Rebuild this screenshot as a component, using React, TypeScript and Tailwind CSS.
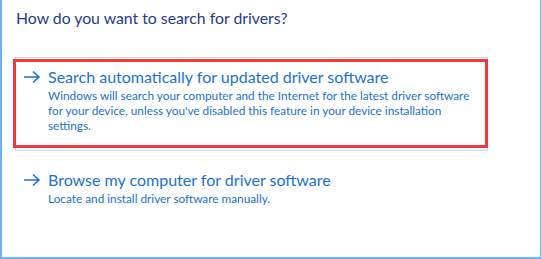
const font = { fontFamily: 'Lato, "Open Sans", sans-serif' };

function Arrow() {
  return (
    <svg width="18" height="14" viewBox="0 0 18 14" className="shrink-0">
      <path d="M1 7h15M10 1.5L16 7l-6 5.5" fill="none" stroke="#1b72d2" strokeWidth="1.6" />
    </svg>
  );
}

export default function App() {
  return (
    <div
      className="relative w-[541px] h-[259px] bg-white border-l-2 border-r border-b-2 border-[#6fb3f4] overflow-hidden"
      style={font}
    >
      <div className="pl-[14px] pt-[6px] text-[15.8px] text-[#1e3a94] leading-[24px]">
        How do you want to search for drivers?
      </div>

      {/* option 1 */}
      <div className="ml-[13px] mt-[27px] w-[473px] h-[94px] border border-[#c9dbea] pl-[7px] pt-[8px]">
        <div className="flex items-center gap-[7px]">
          <Arrow />
          <span className="text-[16px] leading-[22px] text-[#1b72d2]">
            Search automatically for updated driver software
          </span>
        </div>
        <p className="ml-[25px] whitespace-nowrap text-[11.8px] leading-[15px] text-[#1b72d2]">
          Windows will search your computer and the Internet for the latest driver software
          <br />
          for your device, unless you've disabled this feature in your device installation
          <br />
          settings.
        </p>
      </div>

      {/* option 2 */}
      <div className="ml-[13px] mt-[18px] pl-[8px]">
        <div className="flex items-center gap-[7px]">
          <Arrow />
          <span className="text-[16px] leading-[22px] text-[#1b72d2]">
            Browse my computer for driver software
          </span>
        </div>
        <p className="ml-[25px] text-[11.8px] leading-[15px] text-[#1b72d2]">
          Locate and install driver software manually.
        </p>
      </div>

      {/* red highlight annotation */}
      <div className="absolute left-[11px] top-[59px] w-[475px] h-[89px] border-[3px] border-[#f2383a] pointer-events-none" />
    </div>
  );
}
